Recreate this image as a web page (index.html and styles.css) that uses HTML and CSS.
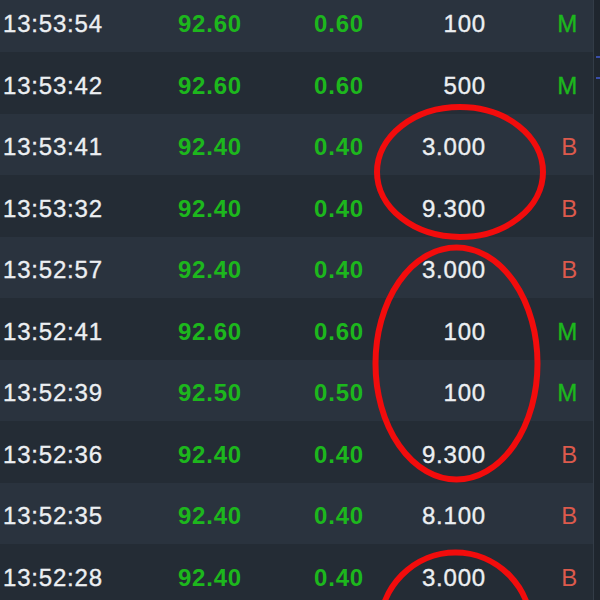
FILE: index.html
```html
<!DOCTYPE html>
<html>
<head>
<meta charset="utf-8">
<link rel="stylesheet" href="styles.css">
</head>
<body>
<div class="screen">
  <div class="table">
    <div class="row light"><span class="time">13:53:54</span><span class="up">92.60</span><span class="up">0.60</span><span class="vol">100</span><span class="m">M</span></div>
    <div class="row dark"><span class="time">13:53:42</span><span class="up">92.60</span><span class="up">0.60</span><span class="vol">500</span><span class="m">M</span></div>
    <div class="row light"><span class="time">13:53:41</span><span class="up">92.40</span><span class="up">0.40</span><span class="vol">3.000</span><span class="b">B</span></div>
    <div class="row dark"><span class="time">13:53:32</span><span class="up">92.40</span><span class="up">0.40</span><span class="vol">9.300</span><span class="b">B</span></div>
    <div class="row light"><span class="time">13:52:57</span><span class="up">92.40</span><span class="up">0.40</span><span class="vol">3.000</span><span class="b">B</span></div>
    <div class="row dark"><span class="time">13:52:41</span><span class="up">92.60</span><span class="up">0.60</span><span class="vol">100</span><span class="m">M</span></div>
    <div class="row light"><span class="time">13:52:39</span><span class="up">92.50</span><span class="up">0.50</span><span class="vol">100</span><span class="m">M</span></div>
    <div class="row dark"><span class="time">13:52:36</span><span class="up">92.40</span><span class="up">0.40</span><span class="vol">9.300</span><span class="b">B</span></div>
    <div class="row light"><span class="time">13:52:35</span><span class="up">92.40</span><span class="up">0.40</span><span class="vol">8.100</span><span class="b">B</span></div>
    <div class="row dark"><span class="time">13:52:28</span><span class="up">92.40</span><span class="up">0.40</span><span class="vol">3.000</span><span class="b">B</span></div>
  </div>
  <div class="scrollbar"><i class="tick t1"></i><i class="tick t2"></i></div>
  <svg class="marks" width="600" height="600" viewBox="0 0 600 600">
    <ellipse cx="460" cy="172" rx="83" ry="65" />
    <ellipse cx="456.5" cy="363.5" rx="81" ry="116" />
    <ellipse cx="455.5" cy="630" rx="76" ry="77.5" />
  </svg>
</div>
</body>
</html>
```
FILE: styles.css
```css
html, body {
  margin: 0;
  padding: 0;
  background: #262e38;
}
.screen {
  position: relative;
  width: 600px;
  height: 600px;
  overflow: hidden;
  display: flex;
  font-family: "Liberation Sans", Arial, sans-serif;
  font-size: 24px;
  letter-spacing: 0.8px;
}
.table {
  width: 594px;
  margin-top: -9.5px;
}
.row {
  height: 61.5px;
  box-sizing: border-box;
  padding: 6px 0 0 3px;
  display: grid;
  grid-template-columns: 147px 92px 122px 122px 92px;
  align-items: center;
}
.row.light { background: #2a333e; }
.row.dark { background: #242c35; }
.row span { text-align: right; }
.row .time { text-align: left; color: #eceff2; -webkit-text-stroke: 0.35px #eceff2; }
.up { color: #1db71d; font-weight: bold; }
.vol { color: #eceff2; -webkit-text-stroke: 0.35px #eceff2; }
.m { color: #1db71d; -webkit-text-stroke: 0.4px #1db71d; }
.b { color: #dc5a4c; }
.scrollbar {
  width: 6px;
  background: #1f262e;
  border-left: 1px solid #333c47;
  display: flex;
  flex-direction: column;
}
.tick {
  display: block;
  height: 2px;
  background: #3a4ea8;
  margin-left: 2px;
}
.t1 { margin-top: 56px; }
.t2 { margin-top: 19px; }
.marks {
  position: absolute;
  left: 0;
  top: 0;
  pointer-events: none;
}
.marks ellipse {
  fill: none;
  stroke: #f20c0c;
  stroke-width: 6;
}
```
